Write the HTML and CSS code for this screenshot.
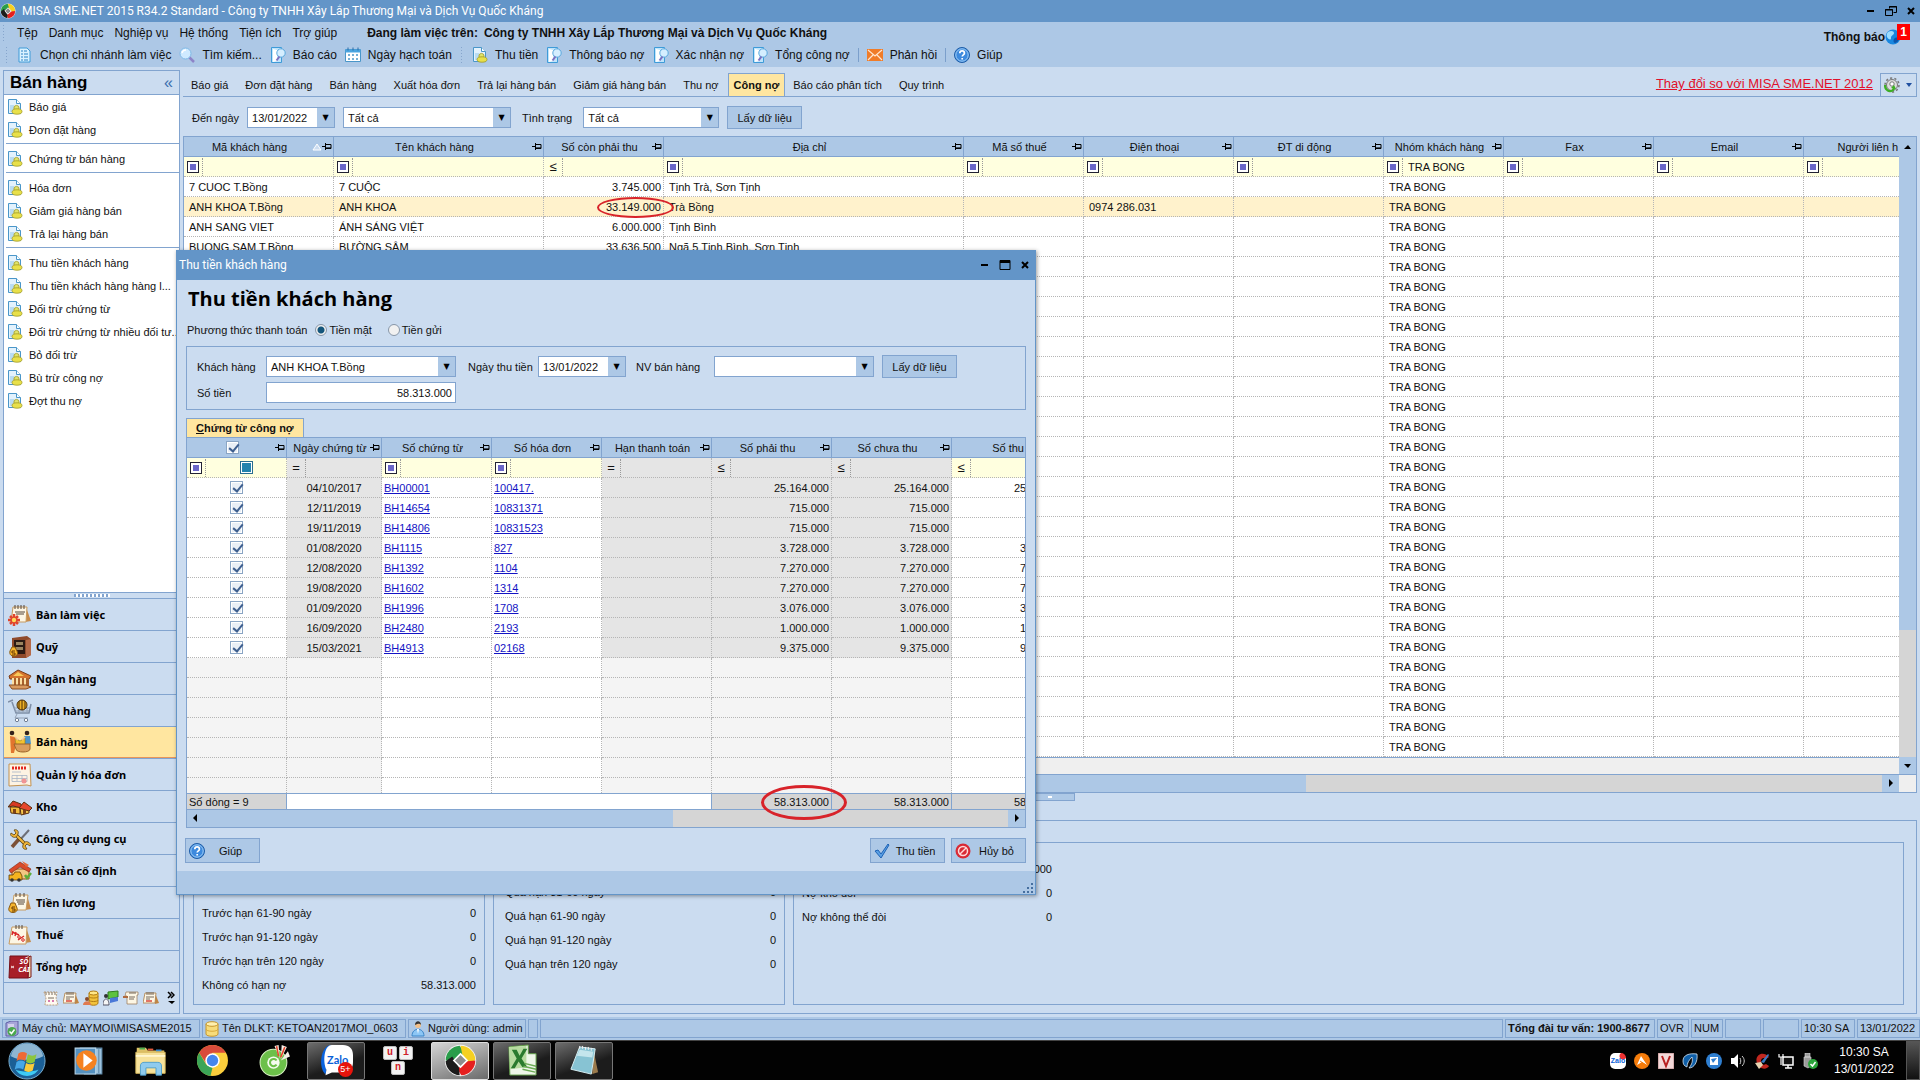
FILE: index.html
```html
<!DOCTYPE html>
<html lang="vi">

<head>
  <meta charset="utf-8">
  <meta name="viewport" content="width=device-width, initial-scale=1.0">
  <title>MISA SME.NET 2015</title>
  <link rel="stylesheet" href="styles.css">
</head>

<body>
  <!-- icon sprite -->
  <svg class="sprite" aria-hidden="true">
    <symbol id="i-misa" viewBox="0 0 40 40">
      <circle cx="20" cy="20" r="19" fill="#f4f4f4"/>
      <path d="M2 20A18 18 0 0 1 19 2l6 9-12 9z" fill="#2a9d4a"/>
      <path d="M20 2a18 18 0 0 1 18 17l-7 6-9-13z" fill="#f6d022"/>
      <path d="M38 20a18 18 0 0 1-17 18l-5-8 12-9z" fill="#e5201f"/>
      <path d="M19 38A18 18 0 0 1 2 21l8-6 8 13z" fill="#1c1c1c"/>
      <path d="M20 12l8 8-8 8-8-8z" fill="#8d8d8d" stroke="#fff" stroke-width="2"/>
    </symbol>
    <symbol id="i-pin" viewBox="0 0 10 9">
      <path d="M0 4.5h3M3.5 1v7M4 2.5h5v4H4" fill="none" stroke="#000"/>
      <path d="M4 5.500h5" stroke="#000" stroke-width=".6"/>
    </symbol>
    <symbol id="i-doc" viewBox="0 0 16 16">
      <path d="M1.500.5h8l4 4v10h-12z" fill="#e3f2fd" stroke="#4a96c9"/>
      <path d="M9.500.5v4h4" fill="#fff" stroke="#4a96c9"/>
      <path d="M3 6h4v7H3z" fill="#b9dcf3"/>
      <circle cx="9.500" cy="9" r="2.600" fill="#dfe36a" stroke="#a39a25" stroke-width=".8"/>
      <ellipse cx="10" cy="12.500" rx="5" ry="2.700" fill="#e8e04a" stroke="#a39a25" stroke-width=".8"/>
    </symbol>
    <symbol id="i-branch" viewBox="0 0 16 16">
      <path d="M2 1h8l3 3v11H2z" fill="#d9f1ff" stroke="#3e9bd8"/>
      <path d="M4 4h2M4 7h2M4 10h2M4 13h2M7 4h3M7 7h4M7 10h4M7 13h4" stroke="#2b82c4"/>
    </symbol>
    <symbol id="i-search" viewBox="0 0 16 16">
      <path d="M10 10l5 5" stroke="#8d84c8" stroke-width="2.500"/>
      <circle cx="6.500" cy="6.500" r="5.500" fill="#cfeaff" stroke="#7fb9e6"/>
      <path d="M3 6a4 4 0 0 1 4-3" fill="none" stroke="#fff" stroke-width="1.500"/>
    </symbol>
    <symbol id="i-report" viewBox="0 0 16 16">
      <path d="M1.500.5h10v15h-10z" fill="#bfe4fb" stroke="#3e9bd8"/>
      <path d="M3 2l4 1v11l-4 1z" fill="#fff"/>
      <circle cx="11" cy="6" r="4.200" fill="#d5eeff" stroke="#5aa8dd"/>
      <path d="M9.500 9.500l-3 4" stroke="#7d6fc0" stroke-width="2"/>
    </symbol>
    <symbol id="i-cal" viewBox="0 0 16 16">
      <path d="M.5 2.500h15v12H.5z" fill="#fff" stroke="#4a96c9"/>
      <path d="M.5 2.500h15v3H.5z" fill="#4aa5e0"/>
      <path d="M3 .5v3M8 .5v3M13 .5v3" stroke="#2a6da8"/>
      <path d="M3 8h2M7 8h2M11 8h2M3 12h2M7 12h2M11 12h2" stroke="#4a96c9" stroke-width="1.500"/>
    </symbol>
    <symbol id="i-mail" viewBox="0 0 16 16">
      <path d="M0 2h16v12H0z" fill="#f07c28"/>
      <path d="M1 3l7 6 7-6M1 13l5-5M15 13l-5-5" fill="none" stroke="#ffe6cf" stroke-width="1.200"/>
    </symbol>
    <symbol id="i-help" viewBox="0 0 16 16">
      <circle cx="8" cy="8" r="7.500" fill="#3d8ade" stroke="#1d5ca6"/>
      <circle cx="8" cy="8" r="6.200" fill="none" stroke="#9fcdf5"/>
      <path d="M5.800 6.200c0-3 4.600-3 4.600 0 0 1.500-2.200 1.700-2.200 3.300M8.200 11v1.500" fill="none" stroke="#fff" stroke-width="1.700"/>
    </symbol>
    <symbol id="i-globe" viewBox="0 0 16 16">
      <circle cx="8" cy="8" r="7.500" fill="#1887e0"/>
      <path d="M3 3c3-2 6-1 6 1S6 6 6 9s-3 1-4-1 0-4 1-5z" fill="#9bdcff"/>
      <path d="M10 9c2-1 4 0 4 1s-2 4-4 4-2-4 0-5z" fill="#0c55ab"/>
    </symbol>
    <symbol id="i-gear" viewBox="0 0 16 16">
      <circle cx="8" cy="8" r="5.500" fill="#ddd" stroke="#777"/>
      <circle cx="8" cy="8" r="7" fill="none" stroke="#777" stroke-width="1.500" stroke-dasharray="2.200 2.200"/>
      <circle cx="8" cy="7" r="2.200" fill="#fff" stroke="#777"/>
      <path d="M1 8c0 7 8 8 9 3" fill="none" stroke="#3db024" stroke-width="2.200"/>
      <path d="M7 11l3-3 2 4z" fill="#3db024"/>
    </symbol>
    <symbol id="i-tick" viewBox="0 0 16 16">
      <path d="M1 8l3-1 3 4L14 1l1 1L7 15z" fill="#5aa0e4" stroke="#1d62b5"/>
    </symbol>
    <symbol id="i-cancel" viewBox="0 0 16 16">
      <circle cx="8" cy="8" r="7.500" fill="#d92a35"/>
      <circle cx="8" cy="8" r="4.500" fill="none" stroke="#ffd9d9" stroke-width="1.500"/>
      <path d="M5 11l6-6" stroke="#ffd9d9" stroke-width="1.500"/>
    </symbol>
    <symbol id="i-server" viewBox="0 0 14 16">
      <path d="M1 2l5-2h7v13l-3 2H1z" fill="#a7a5d9" stroke="#5f5fa5"/>
      <path d="M3 4h6M3 6h6" stroke="#fff"/>
      <circle cx="7" cy="10.500" r="4.500" fill="#4aa84f"/>
      <path d="M4.500 10.500l2 2 3-4" fill="none" stroke="#fff" stroke-width="1.500"/>
    </symbol>
    <symbol id="i-db" viewBox="0 0 14 16">
      <path d="M1 3v10c0 3 12 3 12 0V3z" fill="#f7dc7a" stroke="#c6962a"/>
      <ellipse cx="7" cy="3" rx="6" ry="2.300" fill="#fff0ae" stroke="#c6962a"/>
      <path d="M1 8c0 3 12 3 12 0" fill="none" stroke="#d9a93a"/>
    </symbol>
    <symbol id="i-user" viewBox="0 0 14 16">
      <circle cx="7" cy="4" r="3" fill="#f3c08a"/>
      <path d="M4 4c0-5 6-5 6 0-2-2-3-1-6 0z" fill="#333"/>
      <path d="M1 15c0-9 12-9 12 0z" fill="#8cc6f5" stroke="#3d86c8"/>
      <path d="M6 8l1 5 1-5z" fill="#fff"/>
    </symbol>

    <!-- module bar -->
    <symbol id="n-desk" viewBox="0 0 24 24">
      <path d="M18 4l5 14-6 1z" fill="#c68b4b"/>
      <path d="M5 4h14l-1 15H3z" fill="#fdf6e4" stroke="#c79a5e"/>
      <path d="M7 2v4M10 2v4M13 2v4M16 2v4M7 9h10M8 11h8" stroke="#54463a"/>
      <path d="M6 11v12M0 17h12M2 13l8 8M10 13l-8 8" stroke="#e0452c" stroke-width="2.500"/>
      <circle cx="6" cy="17" r="2.200" fill="#ffd95a"/>
    </symbol>
    <symbol id="n-safe" viewBox="0 0 24 24">
      <path d="M4 3l15-2 4 3v16l-5 3H4z" fill="#8f4a2c"/>
      <path d="M18 5l5-1v16l-5 3z" fill="#b56a49"/>
      <path d="M6 5h11v14H6z" fill="#2b1a14"/>
      <path d="M8 7h7v3H8zM8 12h7v3H8z" fill="#9a8460"/>
      <path d="M4 12h3l2 4c3 7-9 7-7 0z" fill="#f7b52d" stroke="#8a5a10"/>
      <path d="M7 16H4v2h3v2H4" fill="none" stroke="#6b3b00"/>
    </symbol>
    <symbol id="n-bank" viewBox="0 0 24 24">
      <path d="M1 9l9-6 13 6-2 3H2z" fill="#d5732e" stroke="#7b3b16"/>
      <path d="M5 9l5-4 6 4z" fill="#f8c95b"/>
      <path d="M4 11h17v8H4z" fill="#a9612d"/>
      <path d="M5 11v8M9 11v8M13 11v8M17 11v8" stroke="#fbe0a4" stroke-width="2"/>
      <path d="M1 18h17l5 2-5 2H4z" fill="#d99a5e" stroke="#8a4c20"/>
    </symbol>
    <symbol id="n-cart" viewBox="0 0 24 24">
      <path d="M0 3l5-2M4 3l4 11h13l2-9" fill="none" stroke="#7e8ea6" stroke-width="1.500"/>
      <path d="M6 9h16M7 12h14M9 15l-2 4h13M11 9v6M15 9v6M19 9v6" stroke="#93a1b5" fill="none"/>
      <circle cx="14" cy="6" r="5" fill="#eeb024" stroke="#4c3009"/>
      <path d="M11 2v8M14 1v10M17 2v8" stroke="#4c3009"/>
      <circle cx="9" cy="21" r="1.700" fill="#fff" stroke="#6f7e93"/>
      <circle cx="18" cy="21" r="1.700" fill="#fff" stroke="#6f7e93"/>
    </symbol>
    <symbol id="n-sale" viewBox="0 0 24 24">
      <circle cx="4" cy="3" r="2.300" fill="#33221b"/>
      <path d="M2 6l5 1 1 8-2 8H3z" fill="#e2752e"/>
      <circle cx="19" cy="3" r="2.300" fill="#33221b"/>
      <path d="M16 6h6l1 8h-6z" fill="#4d94c9"/>
      <path d="M7 8l5 3 5-3v7H8z" fill="#f2c230" stroke="#8a7a1c" stroke-width=".6"/>
      <path d="M6 14h16v5c0 4-14 4-14 0z" fill="#d99d5c" stroke="#9c6328"/>
      <path d="M7 7l3 3M17 7l-3 3" stroke="#f0c09a" stroke-width="1.500"/>
    </symbol>
    <symbol id="n-invoice" viewBox="0 0 24 24">
      <path d="M1 1h21l1 22-4-1-18 1z" fill="#fdf3e3" stroke="#c4924f"/>
      <path d="M4 5h15" stroke="#e3261e" stroke-width="3" stroke-dasharray="2 1"/>
      <path d="M4 9h9M4 12.500h15v6H4zM9 12v6M14 12v6M4 15.500h15" fill="none" stroke="#a7b4c6" stroke-width=".8"/>
      <circle cx="16" cy="18" r="2.500" fill="#f19494"/>
    </symbol>
    <symbol id="n-store" viewBox="0 0 24 24">
      <path d="M2 12h10v7l-9-1z" fill="#f2b93a" stroke="#59300f"/>
      <path d="M0 12l5-6 8 3 1 4-9-2z" fill="#d93925" stroke="#59300f"/>
      <path d="M12 12h9v6l-8 2z" fill="#f6c64d" stroke="#59300f"/>
      <path d="M11 13l5-6 8 6-3 3z" fill="#e5462b" stroke="#59300f"/>
      <path d="M5 14h3v4H5zM15 15h3v4h-3z" fill="#7d4317"/>
    </symbol>
    <symbol id="n-tools" viewBox="0 0 24 24">
      <path d="M21 3L11 14" stroke="#6d6f78" stroke-width="2"/>
      <path d="M11 12l-7 8" stroke="#7c5138" stroke-width="3.500"/>
      <path d="M7 7l11 11" stroke="#5b4312" stroke-width="3.500"/>
      <path d="M7 7l11 11" stroke="#f2b63a" stroke-width="2"/>
      <path d="M3 6l3 2 2-2-2-3c3-1 5 1 4 4s-3 4-5 3-3-2-2-4z" fill="#f2b63a" stroke="#5b4312" stroke-width=".8"/>
      <path d="M22 19l-3-2-2 2 2 3c-3 1-5-1-4-4s3-4 5-3 3 2 2 4z" fill="#f2b63a" stroke="#5b4312" stroke-width=".8"/>
    </symbol>
    <symbol id="n-asset" viewBox="0 0 24 24">
      <path d="M4 10h17v10H4z" fill="#f3c681" stroke="#96551d"/>
      <path d="M1 11L12 3l11 7-2 3-9-5-9 6z" fill="#d94a2a" stroke="#7d2512" stroke-width=".6"/>
      <path d="M14 2l7 4-3 2z" fill="#e8663a"/>
      <path d="M1 16h4l2-3h5l2 4v4H1z" fill="#f5b31f" stroke="#5e3a08" stroke-width=".8"/>
      <circle cx="4" cy="21" r="1.800" fill="#333"/>
      <circle cx="11" cy="21" r="1.800" fill="#333"/>
      <path d="M17 16l2 3 4-5" fill="none" stroke="#5cad3a" stroke-width="2.500"/>
    </symbol>
    <symbol id="n-pay" viewBox="0 0 24 24">
      <path d="M19 4l4 14-6 1z" fill="#c68b4b"/>
      <path d="M6 4h14l-2 15H4z" fill="#fdf6e4" stroke="#c79a5e"/>
      <path d="M8 2v4M12 2v4M16 2v4M8 9h9M9 11h8M10 13h6" stroke="#54463a"/>
      <path d="M3 12h4l2 5c2 6-10 6-8 0z" fill="#f7b52d" stroke="#8a5a10"/>
      <path d="M7 16H4v2h3v2H4" fill="none" stroke="#6b3b00"/>
    </symbol>
    <symbol id="n-tax" viewBox="0 0 24 24">
      <path d="M18 4l5 15-6 1z" fill="#c68b4b"/>
      <path d="M4 4h15l-1 17H1z" fill="#fdf6e4" stroke="#c79a5e"/>
      <path d="M8 2v4M11 2v4M14 2v4" stroke="#54463a"/>
      <path d="M4 9l7 3M5 8l-1 4M8 9l-1 4M10 17l6-4" stroke="#d92525" stroke-width="1.400"/>
      <circle cx="11" cy="14" r="1.300" fill="none" stroke="#d92525"/>
      <circle cx="15" cy="17" r="1.300" fill="none" stroke="#d92525"/>
    </symbol>
    <symbol id="n-ledger" viewBox="0 0 24 24">
      <path d="M20 2l3-1v21l-3 1z" fill="#e9d7b3" stroke="#7c1717"/>
      <path d="M2 1h19l-1 22H1z" fill="#a81f28" stroke="#751018"/>
      <path d="M3 11l3 2M3 13l3-2" stroke="#f3dada"/>
    </symbol>
    <symbol id="m-page" viewBox="0 0 16 16">
      <path d="M1 2h13l-1 6 2 7H2L3 8z" fill="#fffaf0" stroke="#b08d64" stroke-width=".8" stroke-dasharray="2 1"/>
      <path d="M3 2v3M6 2v3M9 2v3M12 2v3M5 8h6" stroke="#54463a" stroke-width=".8"/>
      <path d="M5 11h2M9 11h2" stroke="#c94f9a" stroke-width="1.500"/>
    </symbol>
    <symbol id="m-note" viewBox="0 0 16 16">
      <path d="M12 3l4 10-4 1z" fill="#bf8545"/>
      <path d="M2 3h11l-1 10H0z" fill="#fdf6e4" stroke="#ab7b42" stroke-width=".8"/>
      <path d="M4 2v3M6 2v3M8 2v3M10 2v3M3 7h8M3 9h4" stroke="#54463a" stroke-width=".8"/>
      <path d="M3 11h6" stroke="#d9483b" stroke-width="1.500"/>
    </symbol>
    <symbol id="m-scroll" viewBox="0 0 16 16">
      <path d="M3 2h12v3h-1v9H4V6H2z" fill="#fdf6e4" stroke="#a08060" stroke-width=".8"/>
      <path d="M6 3h7M6 7h6M6 9h5" stroke="#54463a" stroke-width=".8"/>
      <path d="M0 7h5" stroke="#b06a3d" stroke-width="2"/>
    </symbol>
    <symbol id="m-coin" viewBox="0 0 16 16">
      <path d="M6 3v10c0 3 9 3 9 0V3z" fill="#f2c23b" stroke="#b17d12"/>
      <ellipse cx="10.500" cy="3" rx="4.500" ry="2" fill="#ffe787" stroke="#b17d12"/>
      <path d="M6 6.500c0 2 9 2 9 0M6 10c0 2 9 2 9 0" fill="none" stroke="#b17d12"/>
      <circle cx="4" cy="9" r="2" fill="#8a4a2b"/>
      <path d="M0 15c0-5 8-5 8 0z" fill="#e07a50"/>
    </symbol>
    <symbol id="m-cash" viewBox="0 0 16 16">
      <path d="M5 2l10-1v6L5 9z" fill="#5cc23e" stroke="#2f7d1c"/>
      <path d="M7 8l8-1v4l-8 2z" fill="#4a78d8"/>
      <circle cx="3" cy="6" r="2" fill="#333"/>
      <path d="M0 15c0-8 6-8 6 0z" fill="#f6f6f6" stroke="#556"/>
    </symbol>

    <!-- task bar -->
    <symbol id="t-start" viewBox="0 0 40 40">
      <circle cx="20" cy="20" r="19" fill="#1b5f96" stroke="#7fb4d6"/>
      <path d="M3 15C6-3 34-3 37 15c-8 5-26 5-34 0z" fill="#b5d3e6" opacity=".75"/>
      <path d="M8 29c5 9 19 9 24 0-6 3-18 3-24 0z" fill="#3ecbf5"/>
      <path d="M11 12c3-2 6-2 9 0l-2 8c-3-2-6-2-9 0z" fill="#ee6a35"/>
      <path d="M21 13c3 2 6 2 9 0l-2 8c-3 2-6 2-9 0z" fill="#8cc63e"/>
      <path d="M9 21c3-2 6-2 9 0l-2 8c-3-2-6-2-9 0z" fill="#46a7e8"/>
      <path d="M19 22c3 2 6 2 9 0l-2 8c-3 2-6 2-9 0z" fill="#fbcb3a"/>
    </symbol>
    <symbol id="t-wmp" viewBox="0 0 32 32">
      <path d="M8 4h21v25H12z" fill="#9dc3de" stroke="#5c86a5"/>
      <path d="M26 5v23" stroke="#5c86a5"/>
      <path d="M3 4h20v25H3z" fill="#5591bf" stroke="#bcd8ea"/>
      <circle cx="14" cy="16" r="10" fill="#f58220"/>
      <path d="M11 9l9 7-9 7z" fill="#fff"/>
    </symbol>
    <symbol id="t-files" viewBox="0 0 36 34">
      <path d="M3 3h10l2 3h18v20H3z" fill="#dfc167"/>
      <path d="M6 4h6" stroke="#4caf50" stroke-width="2"/>
      <path d="M15 5h6" stroke="#e25a3c" stroke-width="2"/>
      <path d="M24 6h6" stroke="#3a8ad0" stroke-width="2"/>
      <path d="M2 8h32v23H2z" fill="#f7e29a" stroke="#d4b75a"/>
      <path d="M2 12h32" stroke="#fff6cf" stroke-width="2"/>
      <path d="M7 33V23c0-3 2-4 4-4h15c2 0 4 1 4 4v10h-6v-8H13v8z" fill="#8fcbee" stroke="#4c9ccb"/>
    </symbol>
    <symbol id="t-chrome" viewBox="0 0 32 32">
      <circle cx="16" cy="16" r="15" fill="#fbce3c"/>
      <path d="M3 8.500A15 15 0 0 1 29 8.500H16L10 19z" fill="#d94b3b"/>
      <path d="M3 8.500L10 20l6 3-2 8A15 15 0 0 1 3 8.500z" fill="#3ba556"/>
      <circle cx="16" cy="16" r="7" fill="#fff"/>
      <circle cx="16" cy="16" r="5.500" fill="#4586ee"/>
    </symbol>
    <symbol id="t-coc" viewBox="0 0 32 32">
      <circle cx="15" cy="18" r="13" fill="#6cc04a" stroke="#d9f3c4"/>
      <circle cx="15" cy="18" r="6" fill="#f4fbef"/>
      <path d="M18 16a3.500 3.500 0 1 0 0 4" fill="none" stroke="#6cc04a" stroke-width="2"/>
      <path d="M16 2l4-1 1 13zM23 1l5 2-6 12zM29 7l2 5-9 4z" fill="#f6efe7"/>
      <path d="M18 2l2 10M26 3l-4 10" stroke="#e8452d" stroke-width="1.500"/>
    </symbol>
    <symbol id="t-zalo" viewBox="0 0 36 36">
      <path d="M12 1C0 2-2 27 6 33z" fill="#0a63e0"/>
      <path d="M13 1h12c7 0 11 4 11 11v8c0 7-4 11-11 11H13l-7 3 1-6C3 20 4 1 13 1z" fill="#fff"/>
    </symbol>
    <symbol id="t-misa" viewBox="0 0 40 40">
      <use href="#i-misa"/>
    </symbol>
    <symbol id="t-excel" viewBox="0 0 34 34">
      <path d="M3 3l20-2v9h8v22H4z" fill="#eef6e9" stroke="#5f9c46"/>
      <path d="M3 3l18-1v22L4 26z" fill="#b7dba0"/>
      <path d="M6 6h5l3 6 4-7h4l-6 10 6 9h-5l-4-6-4 7H5l6-10z" fill="#2a7a2e"/>
      <path d="M19 20l12 3M18 23l13 3M17 26l13 3" stroke="#6bab54" stroke-width="1.500"/>
    </symbol>
    <symbol id="t-note" viewBox="0 0 34 34">
      <path d="M26 5l5 24-6 2z" fill="#9a7a4c"/>
      <path d="M12 3l16 2-4 26L3 26z" fill="#87c3d3" stroke="#d8eef3"/>
      <path d="M12 6l14 2-1 6L9 12z" fill="#c4e5ec"/>
      <path d="M12 2v3M15 2v3M18 3v3M21 3v3M24 4v3" stroke="#f0f0f0"/>
    </symbol>
    <symbol id="y-avast" viewBox="0 0 16 16">
      <circle cx="8" cy="8" r="8" fill="#f57c0b"/>
      <path d="M3 12L7 3l6 9-5-3z" fill="#fff"/>
      <path d="M6 8l6 4" stroke="#f57c0b"/>
    </symbol>
    <symbol id="y-v" viewBox="0 0 16 16">
      <path d="M0 0h16v16H0z" fill="#f3d9d9" stroke="#b98686"/>
      <path d="M4 3l4 10 4-10" fill="none" stroke="#b72020" stroke-width="2"/>
    </symbol>
    <symbol id="y-blue" viewBox="0 0 16 16">
      <path d="M1 8c0-6 6-8 14-7 1 8-3 14-8 14 3-4 4-7 3-11-3 3-5 6-5 10-3-1-4-3-4-6z" fill="#0f5fa8" stroke="#d5e6f4" stroke-width=".8"/>
    </symbol>
    <symbol id="y-ultra" viewBox="0 0 16 16">
      <circle cx="8" cy="8" r="8" fill="#2f7fd0"/>
      <path d="M4 4h8v8H4z" fill="#fff"/>
      <path d="M5 6l6-1-4 5z" fill="#2f7fd0"/>
    </symbol>
    <symbol id="y-sound" viewBox="0 0 16 16">
      <path d="M1 5h3l4-4v14l-4-4H1z" fill="#fff"/>
      <path d="M10 5c1 2 1 4 0 6M12 3c3 3 3 7 0 10" fill="none" stroke="#ccc"/>
    </symbol>
    <symbol id="y-cc" viewBox="0 0 16 16">
      <path d="M15 4C9-3 0 2 3 10s11 6 12 3l-3-2c-3 2-5 0-5-3s3-4 5-2z" fill="#c0271f"/>
      <path d="M7 9l7-8 1 1-5 8z" fill="#3a7bc4"/>
      <path d="M1 10l6-1 2 3-4 4z" fill="#e6d3b1"/>
    </symbol>
    <symbol id="y-net" viewBox="0 0 16 16">
      <path d="M5 4h10v8H5zM7 15h7M10 12v3" fill="#111" stroke="#fff" stroke-width="1.500"/>
      <path d="M1 1v3h4V1M3 4v8" fill="none" stroke="#fff" stroke-width="1.200"/>
    </symbol>
    <symbol id="y-usb" viewBox="0 0 16 16">
      <path d="M3 0h5v4H3zM2 4h7v9l-3 2-4-2z" fill="#9b9b9b" stroke="#ddd" stroke-width=".6"/>
      <circle cx="11" cy="11" r="5" fill="#2aa43a"/>
      <path d="M8.500 11l2 2 3-4" fill="none" stroke="#fff" stroke-width="1.500"/>
    </symbol>
  </svg>

  <!-- main window -->
  <header>
    <div class="titlebar">
      <svg class="ic16"><use href="#i-misa"/></svg>
      <span class="caption">MISA SME.NET 2015 R34.2 Standard - Công ty TNHH Xây Lắp Thương Mại và Dịch Vụ Quốc Kháng</span>
      <button class="winbtn" aria-label="Thu nhỏ"><svg width="12" height="12"><path d="M2 6h7" stroke="#000" stroke-width="2"/></svg></button>
      <button class="winbtn" aria-label="Khôi phục"><svg width="12" height="12"><path d="M4.500 3.500v-2h7v6h-3M4 2h8M.5 4.500h7v6h-7zM0 5h8" fill="none" stroke="#000"/></svg></button>
      <button class="winbtn" aria-label="Đóng"><svg width="12" height="12"><path d="M3 3l6 6M9 3l-6 6" stroke="#000" stroke-width="2"/></svg></button>
    </div>
    <div class="bars">
      <div class="bars-left">
        <nav class="menubar">
          <span class="grip"></span>
          <button>Tệp</button><button>Danh mục</button><button>Nghiệp vụ</button><button>Hệ thống</button><button>Tiện ích</button><button>Trợ giúp</button>
          <b class="working">Đang làm việc trên:</b><b>Công ty TNHH Xây Lắp Thương Mại và Dịch Vụ Quốc Kháng</b>
        </nav>
        <div class="toolbar">
          <span class="grip"></span>
          <button><svg class="ic16"><use href="#i-branch"/></svg>Chọn chi nhánh làm việc</button>
          <button><svg class="ic16"><use href="#i-search"/></svg>Tìm kiếm...</button>
          <button><svg class="ic16"><use href="#i-report"/></svg>Báo cáo</button>
          <button><svg class="ic16"><use href="#i-cal"/></svg>Ngày hạch toán</button>
          <span class="grip"></span>
          <button><svg class="ic16"><use href="#i-doc"/></svg>Thu tiền</button>
          <button><svg class="ic16"><use href="#i-report"/></svg>Thông báo nợ</button>
          <button><svg class="ic16"><use href="#i-report"/></svg>Xác nhận nợ</button>
          <button><svg class="ic16"><use href="#i-report"/></svg>Tổng công nợ</button>
          <span class="vsep"></span>
          <button><svg class="ic16"><use href="#i-mail"/></svg>Phản hồi</button>
          <span class="vsep"></span>
          <button><svg class="ic16"><use href="#i-help"/></svg>Giúp</button>
        </div>
      </div>
      <button class="notice"><b>Thông báo</b><svg class="ic16"><use href="#i-globe"/></svg><span class="badge">1</span></button>
    </div>
  </header>

  <div class="workspace">
    <aside class="sidebar">
      <h2>Bán hàng<span>«</span></h2>
      <div class="links" id="links"></div>
      <div class="splitter"></div>
      <nav class="modules" id="modules"></nav>
      <div class="mini">
        <svg class="ic16"><use href="#m-page"/></svg>
        <svg class="ic16"><use href="#m-note"/></svg>
        <svg class="ic16"><use href="#m-coin"/></svg>
        <svg class="ic16"><use href="#m-cash"/></svg>
        <svg class="ic16"><use href="#m-scroll"/></svg>
        <svg class="ic16"><use href="#m-note"/></svg>
        <button aria-label="Thêm"><svg width="8" height="14"><path d="M1 1l3 3-3 3M4 1l3 3-3 3" fill="none" stroke="#000" stroke-width="1.500"/><path d="M1 10h7l-3 3z"/></svg></button>
      </div>
    </aside>

    <main>
      <div class="tabs">
        <button>Báo giá</button><button>Đơn đặt hàng</button><button>Bán hàng</button><button>Xuất hóa đơn</button><button>Trả lại hàng bán</button><button>Giảm giá hàng bán</button><button>Thu nợ</button><button class="active">Công nợ</button><button>Báo cáo phân tích</button><button>Quy trình</button>
        <a class="news" href="#">Thay đổi so với MISA SME.NET 2012</a>
        <button class="setup" aria-label="Thiết lập"><svg class="ic16"><use href="#i-gear"/></svg><svg width="6" height="4"><path d="M0 0h6l-3 4z" fill="#1f4fa0"/></svg></button>
      </div>

      <form class="filters">
        <label for="den">Đến ngày</label>
        <span class="combo date"><input id="den" type="text" value="13/01/2022"></span>
        <span class="combo wide"><select aria-label="Nhóm"><option>Tất cả</option></select></span>
        <label class="lbl-state" for="tt">Tình trạng</label>
        <span class="combo state"><select id="tt"><option>Tất cả</option></select></span>
        <button class="btn" type="button">Lấy dữ liệu</button>
      </form>

      <section class="gridbox">
        <div class="gridbody">
          <div class="clip">
            <table class="grid" id="customers">
              <colgroup>
                <col class="w150"><col class="w210"><col class="w120"><col class="w300"><col class="w120"><col class="w150"><col class="w150"><col class="w120"><col class="w150"><col class="w150"><col>
              </colgroup>
              <thead></thead>
              <tbody></tbody>
            </table>
            <div class="gridfoot"></div>
          </div>
          <div class="vscroll"><i class="up"></i><i class="vthumb"></i><i class="vtrack"></i><i class="down"></i></div>
        </div>
        <div class="hscroll"><i class="arrow left"></i><i class="thumb"></i><i class="track"></i><i class="arrow right"></i><i class="corner"></i></div>
      </section>
      <div class="fold"><i></i></div>

      <section class="debts">
        <dl class="box before">
          <div><dt>Trước hạn 61-90 ngày</dt><dd>0</dd></div>
          <div><dt>Trước hạn 91-120 ngày</dt><dd>0</dd></div>
          <div><dt>Trước hạn trên 120 ngày</dt><dd>0</dd></div>
          <div><dt>Không có hạn nợ</dt><dd>58.313.000</dd></div>
        </dl>
        <dl class="box after">
          <div><dt>Quá hạn 31-60 ngày</dt><dd>0</dd></div>
          <div><dt>Quá hạn 61-90 ngày</dt><dd>0</dd></div>
          <div><dt>Quá hạn 91-120 ngày</dt><dd>0</dd></div>
          <div><dt>Quá hạn trên 120 ngày</dt><dd>0</dd></div>
        </dl>
        <dl class="box kinds">
          <div><dt></dt><dd>58.313.000</dd></div>
          <div><dt>Nợ khó đòi</dt><dd>0</dd></div>
          <div><dt>Nợ không thể đòi</dt><dd>0</dd></div>
        </dl>
      </section>
    </main>
  </div>

  <!-- collect payment window -->
  <div class="dialog" role="dialog" aria-labelledby="dlg-title">
    <div class="dlg-bar">
      <span>Thu tiền khách hàng</span>
      <button class="winbtn" aria-label="Thu nhỏ"><svg width="12" height="12"><path d="M2 6h7" stroke="#000" stroke-width="2"/></svg></button>
      <button class="winbtn" aria-label="Phóng to"><svg width="12" height="12"><path d="M1 1.500h10v9H1zM1 3h10" fill="none" stroke="#000"/><path d="M1 1h10v3H1z"/></svg></button>
      <button class="winbtn" aria-label="Đóng"><svg width="12" height="12"><path d="M3 3l6 6M9 3l-6 6" stroke="#000" stroke-width="2"/></svg></button>
    </div>
    <div class="dlg-body">
      <h1 id="dlg-title">Thu tiền khách hàng</h1>
      <div class="method">
        <span>Phương thức thanh toán</span>
        <label><input type="radio" name="pt" checked>Tiền mặt</label>
        <label><input type="radio" name="pt">Tiền gửi</label>
      </div>
      <form class="payer">
        <label for="kh">Khách hàng</label>
        <span class="combo"><select id="kh"><option>ANH KHOA T.Bồng</option></select></span>
        <label for="ngay">Ngày thu tiền</label>
        <span class="combo"><input id="ngay" type="text" value="13/01/2022"></span>
        <label for="nv">NV bán hàng</label>
        <span class="combo"><select id="nv"><option></option></select></span>
        <button class="btn" type="button">Lấy dữ liệu</button>
        <label for="st">Số tiền</label>
        <input class="amount" id="st" type="text" value="58.313.000">
      </form>
      <button class="dlg-tab"><u>C</u>hứng từ công nợ</button>
      <section class="gridbox vouchers">
        <div class="clip">
          <table class="grid" id="vouchers">
            <colgroup>
              <col class="w100"><col class="w95"><col class="w110"><col class="w110"><col class="w110"><col class="w120"><col class="w120"><col>
            </colgroup>
            <thead></thead>
            <tbody></tbody>
            <tfoot>
              <tr>
                <td>Số dòng = 9</td>
                <td class="blank" colspan="4"></td>
                <td class="num"><span class="ring big">58.313.000</span></td>
                <td class="num">58.313.000</td>
                <td class="paid"><span>58.313.000</span></td>
              </tr>
            </tfoot>
          </table>
        </div>
        <div class="hscroll"><i class="arrow left"></i><i class="thumb"></i><i class="track"></i><i class="arrow right"></i></div>
      </section>
      <div class="actions">
        <button class="btn"><svg class="ic16"><use href="#i-help"/></svg><span>Giúp</span></button>
        <button class="btn ok"><svg class="ic16"><use href="#i-tick"/></svg><span>Thu tiền</span></button>
        <button class="btn"><svg class="ic16"><use href="#i-cancel"/></svg><span>Hủy bỏ</span></button>
      </div>
    </div>
    <div class="dlg-status"><svg width="12" height="12"><path d="M8 2h2M8 6h2M4 6h2M8 10h2M4 10h2M0 10h2" stroke="#466f9f" stroke-width="2"/></svg></div>
  </div>

  <footer class="status">
    <span class="s-server"><svg class="ic14"><use href="#i-server"/></svg>Máy chủ: MAYMOI\MISASME2015</span>
    <span class="s-db"><svg class="ic14"><use href="#i-db"/></svg>Tên DLKT: KETOAN2017MOI_0603</span>
    <span class="s-user"><svg class="ic14"><use href="#i-user"/></svg>Người dùng: admin</span>
    <span class="s-gap"></span>
    <span class="s-fill"></span>
    <b class="s-call">Tổng đài tư vấn: 1900-8677</b>
    <span class="s-key">OVR</span>
    <span class="s-key">NUM</span>
    <span class="s-void"></span>
    <span class="s-void"></span>
    <span class="s-time">10:30 SA</span>
    <span class="s-date">13/01/2022</span>
  </footer>

  <div class="taskbar">
    <button class="start" aria-label="Start"><svg><use href="#t-start"/></svg></button>
    <button class="task" aria-label="Media"><svg><use href="#t-wmp"/></svg></button>
    <button class="task" aria-label="Explorer"><svg><use href="#t-files"/></svg></button>
    <button class="task" aria-label="Chrome"><svg><use href="#t-chrome"/></svg></button>
    <button class="task" aria-label="Cốc Cốc"><svg><use href="#t-coc"/></svg></button>
    <button class="task open zalo"><svg><use href="#t-zalo"/></svg><span class="zname">Zalo</span><span class="zcount">5+</span></button>
    <button class="task keys"><kbd>u</kbd><kbd>i</kbd><kbd>n</kbd></button>
    <button class="task open focus" aria-label="MISA"><svg><use href="#t-misa"/></svg></button>
    <button class="task open" aria-label="Excel"><svg><use href="#t-excel"/></svg></button>
    <button class="task open" aria-label="Notepad"><svg><use href="#t-note"/></svg></button>
    <div class="tray">
      <span class="tzalo">Zalo</span>
      <svg class="ic16"><use href="#y-avast"/></svg>
      <svg class="ic16"><use href="#y-v"/></svg>
      <svg class="ic16"><use href="#y-blue"/></svg>
      <svg class="ic16"><use href="#y-ultra"/></svg>
      <svg class="ic16"><use href="#y-sound"/></svg>
      <svg class="ic16"><use href="#y-cc"/></svg>
      <svg class="ic16"><use href="#y-net"/></svg>
      <svg class="ic16"><use href="#y-usb"/></svg>
    </div>
    <div class="clock">10:30 SA<br>13/01/2022</div>
    <button class="peek" aria-label="Desktop"></button>
  </div>

  <script src="script.js"></script>
</body>

</html>
```

FILE: styles.css
```css
* {
  box-sizing: border-box;
}

body {
  margin: 0;
  min-height: 100vh;
  display: flex;
  flex-direction: column;
  position: relative;
  overflow: hidden;
  background: #cbdcf0;
  color: #111;
  font-family: "Liberation Sans", Arial, sans-serif;
  font-size: 11px;
  line-height: 16px;
}

button,
input,
select {
  font: inherit;
  color: inherit;
}

button {
  border: 0;
  padding: 0;
  background: none;
  white-space: nowrap;
}

.sprite {
  display: none;
}

svg {
  flex: none;
}

.ic16 {
  width: 16px;
  height: 16px;
}

.ic14 {
  width: 14px;
  height: 16px;
}

/* title bar, menu, toolbar */
.titlebar {
  height: 22px;
  display: flex;
  align-items: center;
  gap: 6px;
  padding-right: 2px;
  background: #6395c8;
  color: #fff;
  font-family: Roboto, sans-serif;
  font-size: 12px;
}

.caption {
  flex: 1;
  white-space: nowrap;
}

.winbtn {
  width: 14px;
  height: 14px;
  display: grid;
  place-items: center;
}

.bars {
  display: flex;
  justify-content: space-between;
  height: 45px;
  background: #adc8e6;
  font-size: 12px;
}

.menubar,
.toolbar {
  display: flex;
  align-items: center;
  height: 22px;
  padding-left: 2px;
  white-space: nowrap;
}

.menubar {
  gap: 11px;
}

.menubar .working {
  margin-left: 19px;
}

.menubar b + b {
  margin-left: -5px;
}

.toolbar {
  gap: 8px;
  padding-left: 5px;
}

.toolbar button {
  display: flex;
  align-items: center;
  gap: 7px;
}

.grip {
  width: 4px;
  height: 18px;
  background: radial-gradient(circle, #86a5cc 1px, transparent 1px) 0 0 / 3px 3px;
}

.vsep {
  width: 1px;
  height: 14px;
  background: #7b9fcb;
}

.notice {
  display: flex;
  align-items: center;
  position: relative;
  height: 30px;
  margin-right: 19px;
}

.badge {
  position: absolute;
  top: 2px;
  right: -9px;
  width: 13px;
  background: #f00;
  color: #fff;
  font-weight: bold;
  text-align: center;
}

/* workspace */
.workspace {
  flex: 1;
  display: flex;
  gap: 3px;
  padding: 3px;
}

.sidebar {
  width: 177px;
  flex: none;
  display: flex;
  flex-direction: column;
  border: 1px solid #82a4cf;
}

.sidebar h2 {
  display: flex;
  justify-content: space-between;
  align-items: center;
  height: 24px;
  margin: 0;
  padding: 0 6px;
  border-bottom: 1px solid #82a4cf;
  color: #000;
  font-size: 17px;
}

.sidebar h2 span {
  color: #3c6fae;
  font-size: 16px;
  font-weight: normal;
}

.links {
  flex: 1;
  background: #fff;
  padding-left: 2px;
}

.links a {
  display: flex;
  align-items: center;
  gap: 6px;
  height: 23px;
  padding-left: 1px;
  color: inherit;
  text-decoration: none;
  white-space: nowrap;
}

.links hr {
  margin: 2px 0 3px;
  border: 0;
  border-top: 1px solid #82a4cf;
}

.splitter {
  height: 6px;
  border-top: 1px solid #82a4cf;
}

.splitter::after {
  content: "";
  display: block;
  width: 36px;
  height: 3px;
  margin: 1px auto;
  background: repeating-linear-gradient(90deg, #82a4cf 0 2px, #fff 2px 4px);
}

.modules button {
  display: flex;
  align-items: center;
  gap: 4px;
  width: 100%;
  height: 32px;
  padding-left: 4px;
  border-top: 1px solid #82a4cf;
  font-family: "Noto Sans", sans-serif;
  font-size: 11px;
  font-weight: bold;
  color: #000;
}

.modules svg {
  width: 24px;
  height: 24px;
}

.modules .active {
  background: #ffe6a0;
  border-bottom: 1px solid #e8955a;
}

.modules .ledger {
  position: relative;
}

.modules i {
  position: absolute;
  left: 11px;
  top: 7px;
  width: 18px;
  color: #fff;
  font-size: 7px;
  line-height: 8px;
  text-align: center;
}

.mini {
  display: flex;
  align-items: center;
  justify-content: flex-end;
  gap: 4px;
  height: 31px;
  padding-right: 4px;
  border-top: 1px solid #82a4cf;
}

.mini button {
  margin-left: 4px;
  line-height: 0;
}

main {
  flex: 1;
  min-width: 0;
  display: flex;
  flex-direction: column;
}

.tabs {
  display: flex;
  align-items: stretch;
  height: 27px;
  padding: 3px 0 0;
  border-bottom: 1px solid #82a4cf;
}

.tabs button {
  padding: 0 9px 0 8px;
}

.tabs .active {
  padding: 0 5px;
  border: 1px solid #82a4cf;
  border-bottom: 0;
  background: #ffe6a0;
  font-weight: bold;
}

.tabs .news {
  margin-left: auto;
  margin-right: 7px;
  color: #e0102a;
  font-size: 13px;
  line-height: 22px;
}

.tabs .setup {
  display: flex;
  align-items: center;
  gap: 6px;
  width: 37px;
  padding: 0 3px;
  border: 1px solid #82a4cf;
  border-bottom: 0;
}

.filters {
  display: flex;
  align-items: center;
  height: 39px;
  padding: 2px 0 0 9px;
}

.combo {
  display: flex;
  height: 21px;
  border: 1px solid #82a4cf;
  background: #fff;
}

.combo::after {
  content: "▼";
  flex: none;
  width: 17px;
  background: #adc8e6;
  color: #000;
  font-family: "DejaVu Sans", sans-serif;
  font-size: 8px;
  line-height: 20px;
  text-align: center;
}

.combo input,
.combo select {
  flex: 1;
  width: 0;
  border: 0;
  padding: 0 4px;
  appearance: none;
  background: none;
  outline: 0;
}

.filters .date {
  width: 88px;
  margin: 0 8px;
}

.filters .wide {
  width: 168px;
}

.filters .lbl-state {
  margin: 0 11px;
}

.filters .state {
  width: 136px;
  margin-right: 8px;
}

.btn {
  height: 23px;
  min-width: 75px;
  border: 1px solid #82a4cf;
  background: #adc8e6;
}

/* data grids */
.gridbox {
  border: 1px solid #82a4cf;
}

.gridbody {
  display: flex;
}

.clip {
  flex: 1;
  min-width: 0;
  overflow: hidden;
  background: #fff;
}

.grid {
  width: 100%;
  table-layout: fixed;
  border-spacing: 0;
}

.w95 { width: 95px; }
.w100 { width: 100px; }
.w110 { width: 110px; }
.w120 { width: 120px; }
.w150 { width: 150px; }
.w210 { width: 210px; }
.w300 { width: 300px; }

.grid th,
.grid td {
  height: 20px;
  padding: 0 5px;
  white-space: nowrap;
  overflow: hidden;
  line-height: 18px;
}

.grid th {
  padding: 0 1px 0 3px;
  background: #adc8e6;
  border-right: 1px solid #82a4cf;
  border-bottom: 1px solid #82a4cf;
  font-weight: normal;
}

.grid th div {
  display: flex;
  align-items: center;
}

.grid th span {
  flex: 1;
  text-align: center;
  overflow: hidden;
}

.grid th.last span {
  text-align: right;
}

.grid .pin {
  width: 10px;
  height: 9px;
}

.grid th .sort {
  width: 10px;
  height: 8px;
}

.grid td {
  border-right: 1px dotted #b5b5b5;
  border-bottom: 1px dotted #b5b5b5;
}

.grid th:last-child,
.grid td:last-child {
  border-right: 0;
}

.grid .num {
  text-align: right;
  padding-right: 2px;
}

.grid .mid {
  text-align: center;
}

.grid .link {
  padding-left: 2px;
}

/* last column runs on past the right edge of the window */
.grid .paid {
  padding: 0;
}

.grid .paid span {
  display: block;
  width: 117px;
  text-align: right;
}

.grid a {
  color: #1313c4;
}

.grid .find td {
  background: #ffffdf;
  padding: 0 0 0 3px;
}

.grid .find div {
  display: flex;
  align-items: center;
  height: 19px;
}

.grid .find i {
  flex: none;
  width: 12px;
  height: 12px;
  border: 1px solid #223;
  background: #6a66c8;
  box-shadow: inset 0 0 0 2px #fff;
}

.grid .find em {
  flex: none;
  width: 12px;
  font-style: normal;
  font-size: 13px;
  text-align: center;
}

.grid .find div::before {
  content: "";
  order: 1;
  width: 3px;
  height: 18px;
  border-right: 1px dotted #999;
  flex: none;
}

.grid .find b {
  order: 2;
  font-weight: normal;
  padding-left: 5px;
}

.grid .find .off,
.grid .off {
  background: #e5e5e5;
}

.grid .dim {
  background: #f4f4f4;
}

.grid .picked td {
  background: #fff2cc;
}

.grid td.ringed {
  overflow: visible;
}

.ring {
  position: relative;
}

.ring::after {
  content: "";
  position: absolute;
  z-index: 2;
  inset: -4px -13px -5px -9px;
  border: 2px solid #d8232a;
  border-radius: 50%;
}

.ring.big::after {
  inset: -11px -18px -12px -13px;
  border-width: 3px;
}

.gridfoot {
  height: 17px;
  border-top: 1px solid #82a4cf;
  background: #efefef;
}

.vscroll {
  width: 17px;
  display: flex;
  flex-direction: column;
  background: #adc8e6;
}

.vscroll i {
  display: block;
}

.vthumb {
  flex: 475;
}

.vtrack {
  flex: 127;
  background: #d5d5d5;
}

.up,
.down {
  height: 20px;
  background: #000;
  clip-path: polygon(5px 12px, 12px 12px, 9px 8px);
}

.down {
  height: 17px;
  clip-path: polygon(5px 7px, 12px 7px, 9px 11px);
}

.hscroll {
  display: flex;
  height: 18px;
  border-top: 1px solid #82a4cf;
  background: #adc8e6;
}

.hscroll .thumb {
  flex: 1105;
}

.hscroll .track {
  flex: 576;
  background: #d5d5d5;
}

.arrow {
  width: 17px;
  background: #000;
}

.left {
  clip-path: polygon(6px 8px, 10px 4px, 10px 12px);
}

.right {
  clip-path: polygon(11px 8px, 7px 4px, 7px 12px);
}

.corner {
  width: 17px;
  background: #efefef;
}

.fold {
  height: 27px;
}

.fold i {
  display: block;
  width: 50px;
  height: 8px;
  margin: 0 auto;
  border: 1px solid #82a4cf;
  background: linear-gradient(#fff, #fff) center / 4px 2px no-repeat #adc8e6;
}

/* debt summary */
.debts {
  flex: 1;
  display: flex;
  gap: 8px;
  padding: 21px 12px 8px 9px;
  border: 1px solid #82a4cf;
}

.box {
  width: 292px;
  margin: 0;
  padding: 0 8px;
  border: 1px solid #82a4cf;
}

.box div {
  display: flex;
  justify-content: space-between;
  height: 24px;
  line-height: 24px;
}

.box dd {
  margin: 0;
}

.before {
  padding-top: 58px;
}

.after {
  padding: 37px 8px 0 11px;
}

.kinds {
  flex: 1;
  padding-top: 14px;
}

.kinds div {
  width: 250px;
}

/* payment window */
.dialog {
  position: absolute;
  left: 176px;
  top: 250px;
  width: 860px;
  border: 1px solid #6395c8;
  border-top: 0;
  background: #cbdcf0;
  box-shadow: 1px 1px 4px rgba(0, 0, 0, .4);
}

.dlg-bar {
  display: flex;
  align-items: center;
  gap: 6px;
  height: 30px;
  padding: 0 3px 0 2px;
  background: #6395c8;
  color: #fff;
  font-family: Roboto, sans-serif;
  font-size: 12px;
}

.dlg-bar span {
  flex: 1;
}

.dlg-body {
  padding: 5px 9px 8px;
}

.dialog h1 {
  margin: 0 0 0 2px;
  font-family: "Open Sans", sans-serif;
  font-size: 20px;
  line-height: 28px;
  color: #000;
}

.method {
  display: flex;
  align-items: center;
  height: 33px;
  padding-left: 1px;
  gap: 8px;
}

.method label {
  display: flex;
  align-items: center;
  gap: 2px;
  margin-right: 8px;
}

input[type="radio"] {
  appearance: none;
  width: 12px;
  height: 12px;
  margin: 0;
  border: 1px solid #8796a8;
  border-radius: 50%;
  background: #f1f1f1;
}

input[type="radio"]:checked {
  background: radial-gradient(circle, #14567c 3px, #f1f1f1 4px);
}

.payer {
  display: grid;
  grid-template-columns: 69px 190px 82px 88px 88px 160px 8px 75px;
  row-gap: 4px;
  align-items: center;
  padding: 8px 9px 6px 10px;
  border: 1px solid #82a4cf;
}

.payer label:nth-of-type(2) {
  padding-left: 12px;
}

.payer label:nth-of-type(3) {
  padding-left: 10px;
}

.payer .btn {
  grid-column: 8;
}

.amount {
  height: 21px;
  border: 1px solid #82a4cf;
  padding: 0 3px;
  text-align: right;
  background: #fff;
}

.dlg-tab {
  display: block;
  height: 19px;
  margin-top: 8px;
  padding: 0 9px;
  border: 1px solid #82a4cf;
  border-bottom: 0;
  background: #ffe6a0;
  font-weight: bold;
}

.vouchers .clip {
  overflow: visible;
}

.vouchers input[type="checkbox"] {
  appearance: none;
  display: block;
  width: 13px;
  height: 13px;
  margin: 0 auto;
  border: 1px solid #8aa5c4;
  background: #e9eff6;
  box-shadow: inset 0 0 0 1px #fff;
}

.vouchers input[type="checkbox"]:checked::after {
  content: "";
  display: block;
  width: 4px;
  height: 8px;
  margin: 0 0 0 4px;
  border: solid #3e5f8f;
  border-width: 0 2px 2px 0;
  transform: rotate(40deg);
}

.vouchers input[type="checkbox"]:indeterminate {
  border-color: #2a6d8e;
  background: #2383ad;
}

.vouchers .find input[type="checkbox"] {
  order: 3;
}

.vouchers .short td {
  height: 15px;
  border-bottom: 0;
}

.vouchers tfoot td {
  height: 16px;
  padding: 0 2px;
  line-height: 14px;
  background: #d5d5d5;
  border: 0;
  border-top: 1px solid #82a4cf;
  border-right: 1px solid #82a4cf;
  overflow: visible;
}

.vouchers tfoot .blank {
  background: #fff;
}

.vouchers tfoot .paid {
  overflow: hidden;
}

.vouchers .hscroll .thumb {
  flex: 469;
}

.vouchers .hscroll .track {
  flex: 335;
}

.actions {
  display: flex;
  gap: 6px;
  margin: 10px 0 0 -1px;
}

.actions .btn {
  display: flex;
  align-items: center;
  height: 25px;
  padding: 0 3px;
}

.actions .btn span {
  flex: 1;
  text-align: center;
}

.actions .ok {
  margin-left: auto;
}

.dlg-status {
  display: flex;
  justify-content: flex-end;
  align-items: flex-end;
  height: 23px;
  background: #adc8e6;
}

/* status bar */
.status {
  display: flex;
  gap: 2px;
  height: 23px;
  padding: 2px 0 2px 2px;
  background: #adc8e6;
  white-space: nowrap;
  line-height: 17px;
}

.status > * {
  display: flex;
  align-items: center;
  gap: 3px;
  padding: 0 2px;
  border: 1px solid #82a4cf;
}

.s-server { width: 198px; }
.s-db { width: 204px; }
.s-user { width: 118px; }
.s-gap { width: 10px; }
.s-fill { flex: 1; }
.s-call { width: 150px; }
.s-key { width: 32px; }
.s-void { width: 36px; }
.s-time { width: 54px; }
.s-date { width: 63px; }

/* task bar */
.taskbar {
  display: flex;
  align-items: center;
  height: 40px;
  border-top: 1px solid #444;
  background: #020202;
  color: #fff;
}

.start {
  width: 54px;
  height: 38px;
  margin-right: 5px;
  line-height: 0;
}

.start svg {
  width: 38px;
  height: 38px;
}

.task {
  position: relative;
  width: 58px;
  height: 38px;
  margin-right: 4px;
  border: 1px solid transparent;
  border-radius: 2px;
  line-height: 0;
}

.task svg {
  width: 33px;
  height: 33px;
}

.task.open {
  border-color: #777;
  background: linear-gradient(160deg, #6d6d6d, #1c1c1c 60%);
}

.task.focus {
  border-color: #ddd;
  background: linear-gradient(160deg, #d5d5d5, #6a6a6a);
}

.zname {
  position: absolute;
  left: 19px;
  top: 17px;
  color: #0a5fd8;
  font-family: Lato, sans-serif;
  font-size: 11px;
  font-weight: bold;
}

.zcount {
  position: absolute;
  right: 11px;
  bottom: 2px;
  width: 15px;
  height: 15px;
  border-radius: 50%;
  background: #e8140c;
  font-size: 9px;
  line-height: 15px;
  color: #fff;
}

.keys {
  display: flex;
  flex-wrap: wrap;
  justify-content: center;
  align-content: center;
  gap: 1px 2px;
  padding: 0 12px;
}

.keys kbd {
  width: 14px;
  height: 14px;
  border: 1px solid #bbb;
  border-radius: 2px;
  background: #f2f2f2;
  color: #d0202a;
  font: bold 10px/11px "Liberation Mono", monospace;
}

.tray {
  display: flex;
  align-items: center;
  gap: 8px;
  margin-left: auto;
}

.tzalo {
  width: 16px;
  height: 16px;
  border-radius: 5px;
  background: radial-gradient(circle at 13px 3px, #e33 3px, transparent 4px) #fff;
  color: #0a5fd8;
  font-size: 7px;
  font-weight: bold;
  text-align: center;
}

.clock {
  width: 76px;
  margin-left: 8px;
  font-size: 12px;
  line-height: 17px;
  text-align: center;
}

.peek {
  width: 14px;
  height: 39px;
  margin-left: 4px;
  border: 1px solid #555;
  background: linear-gradient(#555, #111);
}
```

FILE: script.js
```js
const pin = '<svg class="pin"><use href="#i-pin"/></svg>';
const sort = '<svg class="sort"><path d="M5 1l4 6H1z" fill="#cbdcf0" stroke="#fff"/></svg>';

// sidebar links, '-' draws a separator
const links = ['Báo giá', 'Đơn đặt hàng', '-', 'Chứng từ bán hàng', '-', 'Hóa đơn', 'Giảm giá hàng bán', 'Trả lại hàng bán', '-',
  'Thu tiền khách hàng', 'Thu tiền khách hàng hàng l...', 'Đối trừ chứng từ', 'Đối trừ chứng từ nhiều đối tư...', 'Bỏ đối trừ', 'Bù trừ công nợ', 'Đợt thu nợ'];
document.getElementById('links').innerHTML = links.map(t => t === '-' ? '<hr>' :
  `<a href="#"><svg class="ic16"><use href="#i-doc"/></svg><span>${t}</span></a>`).join('');

const modules = [['desk', 'Bàn làm việc'], ['safe', 'Quỹ'], ['bank', 'Ngân hàng'], ['cart', 'Mua hàng'], ['sale', 'Bán hàng'], ['invoice', 'Quản lý hóa đơn'],
  ['store', 'Kho'], ['tools', 'Công cụ dụng cụ'], ['asset', 'Tài sản cố định'], ['pay', 'Tiền lương'], ['tax', 'Thuế'], ['ledger', 'Tổng hợp']];
document.getElementById('modules').innerHTML = modules.map(([id, t]) =>
  `<button class="${id}${id === 'sale' ? ' active' : ''}"><svg><use href="#n-${id}"/></svg>${t}${id === 'ledger' ? '<i>SỔ<br>CÁI</i>' : ''}</button>`).join('');

// customer grid
const heads = ['Mã khách hàng', 'Tên khách hàng', 'Số còn phải thu', 'Địa chỉ', 'Mã số thuế', 'Điện thoại', 'ĐT di động', 'Nhóm khách hàng', 'Fax', 'Email'];
const customers = document.getElementById('customers');
customers.tHead.innerHTML =
  '<tr>' + heads.map((t, i) => `<th><div><span>${t}</span>${i ? '' : sort}${pin}</div></th>`).join('') + '<th class="last"><div><span>Người liên h</span></div></th></tr>' +
  '<tr class="find">' + heads.concat('').map((t, i) => `<td><div>${i === 2 ? '<em>≤</em>' : '<i></i>'}${i === 7 ? '<b>TRA BONG</b>' : ''}</div></td>`).join('') + '</tr>';

const rows = [
  ['7 CUOC T.Bồng', '7 CUỘC', '3.745.000', 'Tịnh Trà, Sơn Tịnh', ''],
  ['ANH KHOA T.Bồng', 'ANH KHOA', '<span class="ring">33.149.000</span>', 'Trà Bồng', '0974 286.031'],
  ['ANH SANG VIET', 'ÁNH SÁNG VIỆT', '6.000.000', 'Tịnh Bình', ''],
  ['BUONG SAM T.Bồng', 'BƯỜNG SÂM', '33.636.500', 'Ngã 5 Tịnh Bình, Sơn Tịnh', '']
];
while (rows.length < 29) rows.push(['', '', '', '', '']);
customers.tBodies[0].innerHTML = rows.map((r, i) =>
  `<tr${i === 1 ? ' class="picked"' : ''}><td>${r[0]}</td><td>${r[1]}</td><td class="num${i === 1 ? ' ringed' : ''}">${r[2]}</td><td>${r[3]}</td><td></td><td>${r[4]}</td><td></td><td>TRA BONG</td><td></td><td></td><td></td></tr>`).join('');

// voucher grid
const cols = ['Ngày chứng từ', 'Số chứng từ', 'Số hóa đơn', 'Hạn thanh toán', 'Số phải thu', 'Số chưa thu'];
const vouchers = document.getElementById('vouchers');
vouchers.tHead.innerHTML =
  `<tr><th><div><span><input type="checkbox" checked aria-label="Chọn tất cả"></span>${pin}</div></th>` + cols.map(t => `<th><div><span>${t}</span>${pin}</div></th>`).join('') +
  '<th class="last"><div><span>Số thu</span></div></th></tr>' +
  '<tr class="find"><td><div><i></i><input type="checkbox" id="tri" aria-label="Lọc"></div></td><td class="off"><div><em>=</em></div></td><td><div><i></i></div></td><td><div><i></i></div></td>' +
  '<td class="off"><div><em>=</em></div></td><td class="off"><div><em>≤</em></div></td><td class="off"><div><em>≤</em></div></td><td><div><em>≤</em></div></td></tr>';
document.getElementById('tri').indeterminate = true;

const docs = [
  ['04/10/2017', 'BH00001', '100417.', '25.164.000'],
  ['12/11/2019', 'BH14654', '10831371', '715.000'],
  ['19/11/2019', 'BH14806', '10831523', '715.000'],
  ['01/08/2020', 'BH1115', '827', '3.728.000'],
  ['12/08/2020', 'BH1392', '1104', '7.270.000'],
  ['19/08/2020', 'BH1602', '1314', '7.270.000'],
  ['01/09/2020', 'BH1996', '1708', '3.076.000'],
  ['16/09/2020', 'BH2480', '2193', '1.000.000'],
  ['15/03/2021', 'BH4913', '02168', '9.375.000']
];
let html = docs.map(([d, so, hd, tien]) =>
  `<tr><td><input type="checkbox" checked aria-label="${so}"></td><td class="off mid">${d}</td><td class="link"><a href="#">${so}</a></td><td class="link"><a href="#">${hd}</a></td>` +
  `<td class="off"></td><td class="off num">${tien}</td><td class="off num">${tien}</td><td class="paid"><span>${tien}</span></td></tr>`).join('');
for (let i = 0; i < 7; i++) {
  html += `<tr${i === 6 ? ' class="short"' : ''}><td class="dim"></td><td class="dim"></td><td></td><td></td><td class="dim"></td><td class="dim"></td><td class="dim"></td><td></td></tr>`;
}
vouchers.tBodies[0].innerHTML = html;
```
